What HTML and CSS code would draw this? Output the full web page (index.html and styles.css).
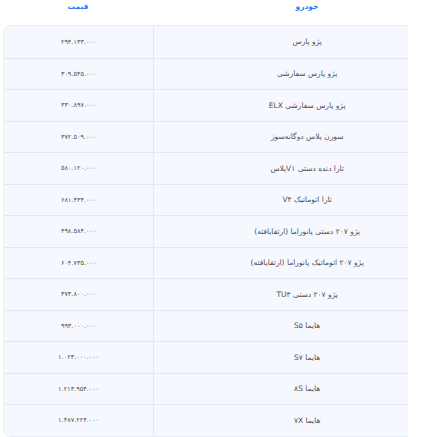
FILE: index.html
```html
<!DOCTYPE html>
<html lang="fa">
<head>
<meta charset="utf-8">
<title>قیمت خودرو</title>
<link rel="stylesheet" href="styles.css">
</head>
<body>
<div class="wrap">
  <div class="table">
    <div class="head">
      <div class="cell car">خودرو</div>
      <div class="cell price">قیمت</div>
    </div>
    <div class="body">
      <div class="row"><div class="cell car">پژو پارس</div><div class="cell price">۲۹۴.۱۳۳.۰۰۰</div></div>
      <div class="row"><div class="cell car">پژو پارس سفارشی</div><div class="cell price">۳۰۹.۵۴۵.۰۰۰</div></div>
      <div class="row"><div class="cell car">پژو پارس سفارشی ELX</div><div class="cell price">۳۳۰.۸۹۷.۰۰۰</div></div>
      <div class="row"><div class="cell car">سورن پلاس دوگانه‌سوز</div><div class="cell price">۳۷۲.۵۰۹.۰۰۰</div></div>
      <div class="row"><div class="cell car">تارا دنده دستی V۱پلاس</div><div class="cell price">۵۸۰.۱۲۰.۰۰۰</div></div>
      <div class="row"><div class="cell car">تارا اتوماتیک V۴</div><div class="cell price">۶۸۱.۴۳۴.۰۰۰</div></div>
      <div class="row"><div class="cell car">پژو ۲۰۷ دستی پانوراما (ارتقایافته)</div><div class="cell price">۴۹۸.۵۸۴.۰۰۰</div></div>
      <div class="row"><div class="cell car">پژو ۲۰۷ اتوماتیک پانوراما (ارتقایافته)</div><div class="cell price">۶۰۴.۷۳۵.۰۰۰</div></div>
      <div class="row"><div class="cell car">پژو ۲۰۷ دستی TU۳</div><div class="cell price">۳۷۳.۸۰۰.۰۰۰</div></div>
      <div class="row"><div class="cell car">هایما S۵</div><div class="cell price">۹۹۳.۰۰۰.۰۰۰</div></div>
      <div class="row"><div class="cell car">هایما S۷</div><div class="cell price">۱.۰۲۳.۰۰۰.۰۰۰</div></div>
      <div class="row"><div class="cell car">هایما ۸S</div><div class="cell price">۱.۲۱۳.۹۵۴.۰۰۰</div></div>
      <div class="row"><div class="cell car">هایما ۷X</div><div class="cell price">۱.۴۸۷.۲۲۴.۰۰۰</div></div>
    </div>
  </div>
</div>
</body>
</html>
```
FILE: styles.css
```css
html, body {
  margin: 0;
  padding: 0;
  background: #ffffff;
}
body {
  font-family: "DejaVu Sans", "Noto Sans", sans-serif;
  color: #505050;
}
.wrap {
  margin-left: 3px;
  width: 405px;
  overflow: hidden;
}
.table {
  direction: rtl;
  width: 458px;
}
.head {
  display: flex;
  height: 14px;
  margin-bottom: 11px;
}
.head .cell {
  color: #2f7bef;
  font-weight: bold;
  font-size: 7.5px;
  line-height: 14px;
}
.cell {
  text-align: center;
  box-sizing: border-box;
}
.car {
  width: 308px;
}
.price {
  width: 150px;
}
.body {
  background: #f5f9ff;
  border: 1px solid #e8edf4;
  border-radius: 8px;
  overflow: hidden;
}
.row {
  display: flex;
  height: 31.5px;
  box-sizing: border-box;
}
.row + .row {
  border-top: 1px solid #e3e8f0;
}
.row .cell {
  display: flex;
  align-items: center;
  justify-content: center;
}
.row .car {
  font-size: 7.5px;
  border-left: 1px solid #e3e8f0;
}
.row .price {
  font-size: 6.5px;
}
```
